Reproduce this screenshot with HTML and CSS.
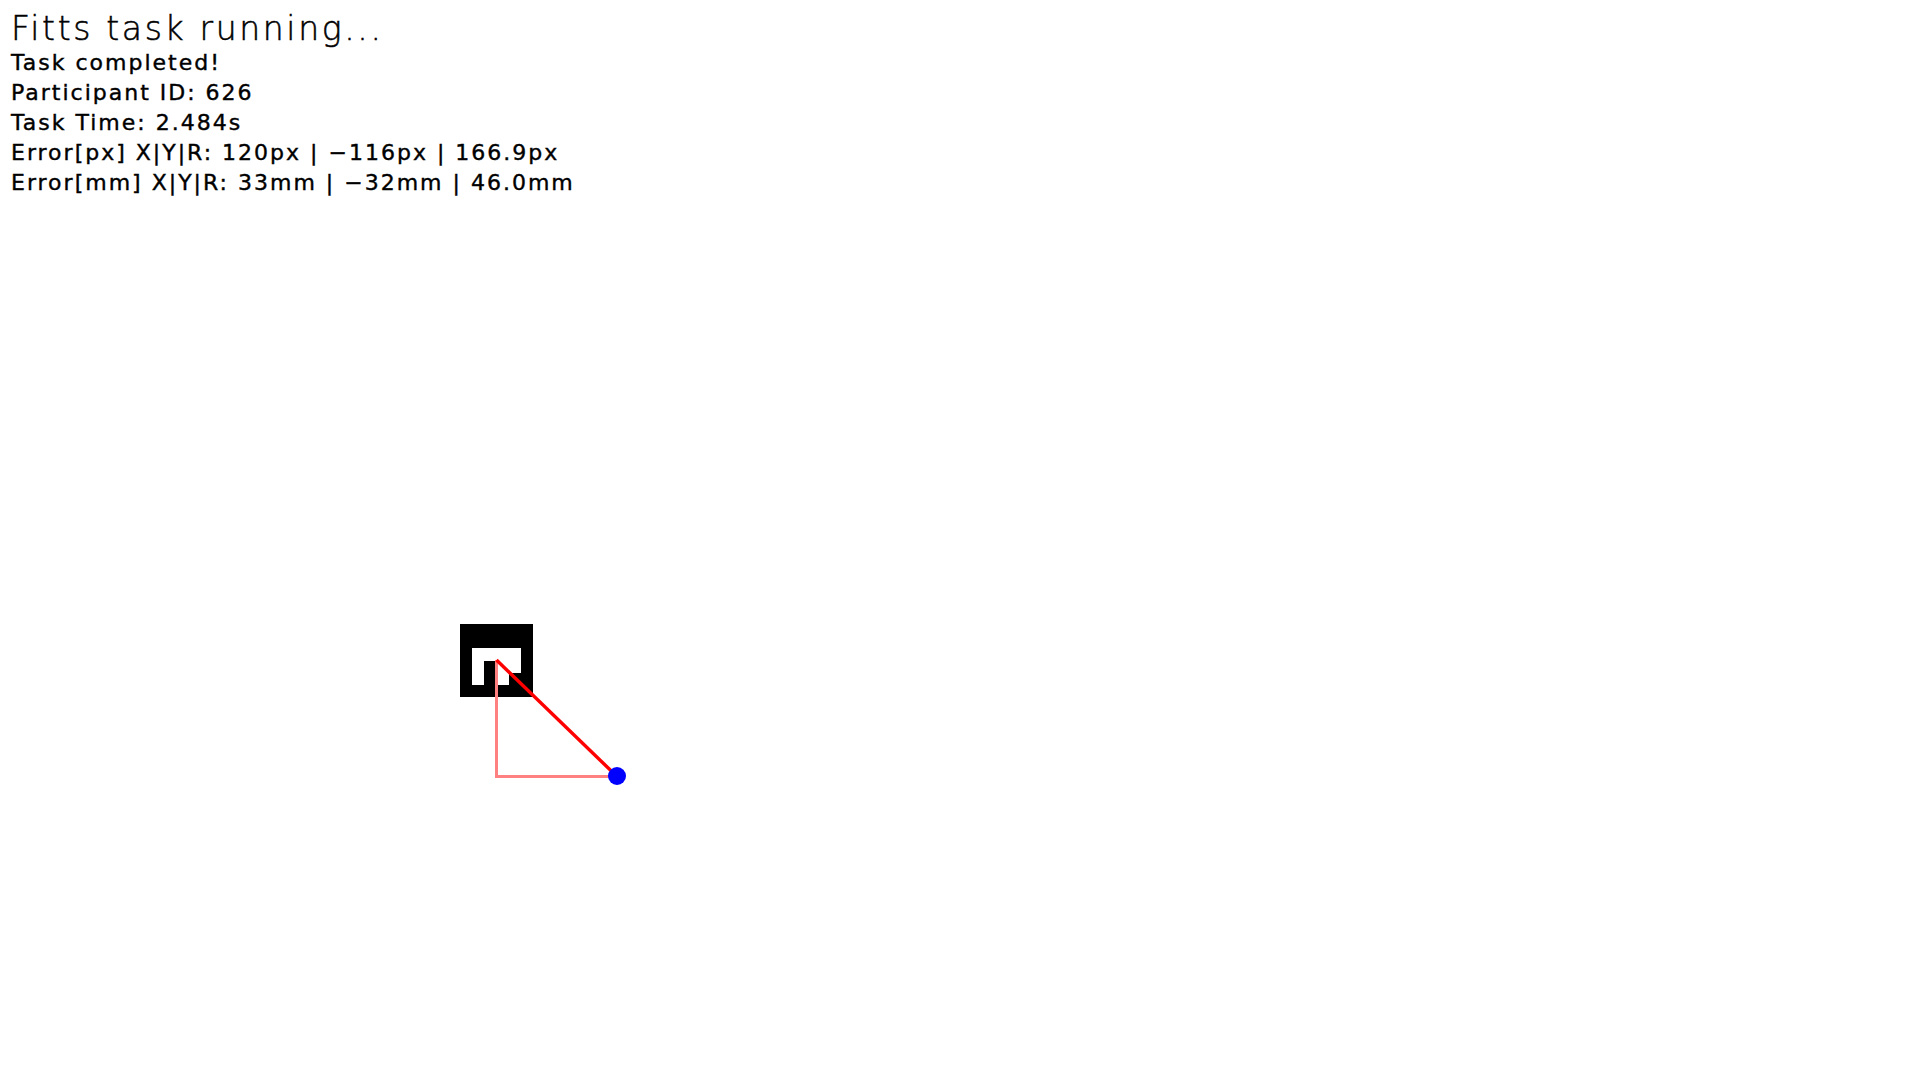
FILE: index.html
```html
<!DOCTYPE html>
<html lang="en">
<head>
<meta charset="utf-8">
<title>Fitts task</title>
<link rel="stylesheet" href="styles.css">
</head>
<body>
<main class="screen">
  <section class="status">
    <h1 class="title">Fitts task running...</h1>
    <p class="line">Task completed!</p>
    <p class="line">Participant ID: 626</p>
    <p class="line">Task Time: 2.484s</p>
    <p class="line">Error[px] X|Y|R: 120px | −116px | 166.9px</p>
    <p class="line">Error[mm] X|Y|R: 33mm | −32mm | 46.0mm</p>
  </section>
  <svg class="canvas" width="1920" height="1080" viewBox="0 0 1920 1080" xmlns="http://www.w3.org/2000/svg">
    <svg x="460" y="624" width="73" height="73" viewBox="0 0 6 6" shape-rendering="crispEdges">
      <rect x="0" y="0" width="6" height="6" fill="#000"/>
      <rect x="1" y="2" width="4" height="1" fill="#fff"/>
      <rect x="1" y="3" width="1" height="2" fill="#fff"/>
      <rect x="3" y="3" width="1" height="2" fill="#fff"/>
      <rect x="4" y="3" width="1" height="1" fill="#fff"/>
    </svg>
    <polyline points="496.5,660 496.5,776.5 617,776.5" fill="none" stroke="#ff8080" stroke-width="3" shape-rendering="crispEdges"/>
    <line x1="496.5" y1="660" x2="617" y2="776.5" stroke="#ff0000" stroke-width="3.4"/>
    <circle cx="617" cy="776" r="9" fill="#0000ff"/>
  </svg>
</main>
</body>
</html>
```
FILE: styles.css
```css
html, body {
  margin: 0;
  padding: 0;
  background: #ffffff;
}
.screen {
  position: relative;
  width: 1920px;
  height: 1080px;
  overflow: hidden;
  background: #ffffff;
}
.status {
  position: relative;
  z-index: 1;
  padding: 10px 0 0 11px;
  color: #000;
  font-family: "DejaVu Sans", "Liberation Sans", sans-serif;
}
.title {
  margin: 0;
  font-size: 33px;
  font-weight: 200;
  line-height: 38px;
  letter-spacing: 2.65px;
  -webkit-text-stroke: 0.5px #000;
}
.line {
  margin: 0;
  font-size: 22px;
  font-weight: 400;
  line-height: 30px;
  letter-spacing: 2px;
  -webkit-text-stroke: 0.4px #000;
}
.canvas {
  position: absolute;
  left: 0;
  top: 0;
}
```
